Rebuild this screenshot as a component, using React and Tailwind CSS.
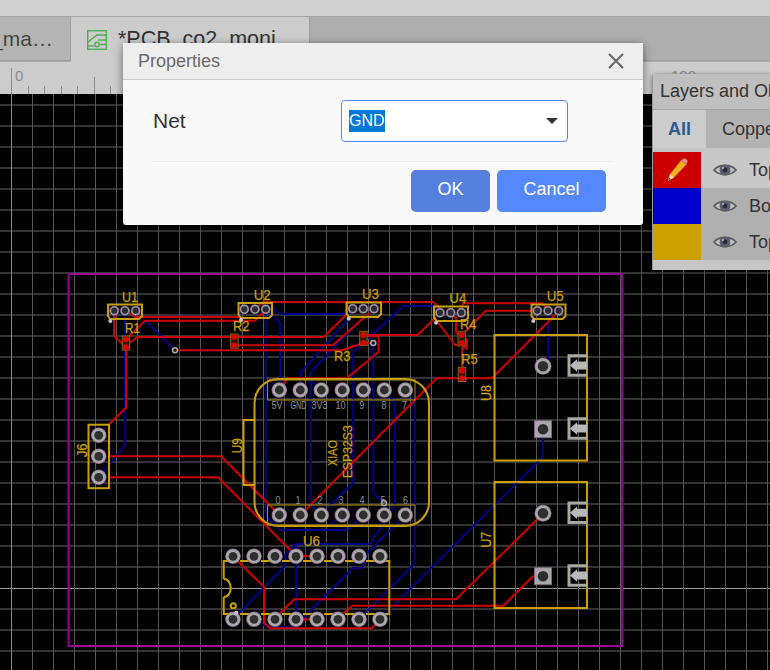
import React from "react";

const RED = "#d00000";
const BLUE = "#000088";
const GOLD = "#cca000";

const redTraces = [
  "M114 314V336L126 347.5V408L109 424",
  "M126 339L131 342L137 337H323.5L347 314",
  "M128 312L135 317H240",
  "M127 338L145 320.7H255L265.7 310",
  "M255 309L263 302H433L441 309",
  "M234 345.3H333L369 313",
  "M175 350.3H342L363 343",
  "M363 335H417.5L436 317",
  "M363 336H378.5V352L346.7 378.3H287L279.3 390",
  "M363 343H373",
  "M450.7 312L456 318V333L461.7 335",
  "M436 320L455 345H461.7L467 349V340L461.7 335",
  "M461.7 335L485.7 310.7H533",
  "M461 312L463 303.3H541.7L548 310",
  "M462 347V371",
  "M462 378.3H491.7L555 315",
  "M462 378.3H436.7L300.3 515",
  "M109 456.3H221L279.3 515",
  "M109 477.3H218L296 556",
  "M296 556H317",
  "M238.3 561.7L264.3 587.3V623L270 628.3H371.7L380 619.3",
  "M280 613.3L294.3 599.3H456L537.3 519.3",
  "M343.3 613.3L352.3 605.7H503.3L533.3 575.7",
  "M296 619.3H317",
];

const blueTraces = [
  "M125 311V445L109 465L98.7 477.3",
  "M145 320L175 350.3",
  "M265.7 310V516L280 530H348L362.3 515",
  "M265.7 309L280 323V390",
  "M273 308L280 314H347",
  "M300.3 390V373L348 320",
  "M321.3 390L310 380V373L345 336L356 325",
  "M310.7 373V505L321.3 515",
  "M342.3 515L330 525",
  "M353.3 483V352L403 306H435",
  "M353.3 483L327 508",
  "M373.3 343V493L384.3 503V515",
  "M384.3 390L395 403V505L370 544H296L285 555V566L233 619.3",
  "M296 544V619.3",
  "M405.3 390L415 400V563L365 613L359 619.3",
  "M405.3 515L368 552L362 568H353L306 615L298 627H268L254 619.3",
  "M543 429.3V457L538 461.7L388 611L380 619.3",
  "M548 310V366",
];

const smallPads = [
  [114.3, 310.7], [125, 310.7], [135.7, 310.7],
  [244.3, 309.3], [255, 309.3], [265.7, 309.3],
  [352.7, 308.7], [363.3, 308.7], [374, 308.7],
  [440, 312.7], [450.7, 312.7], [461.3, 312.7],
  [537.3, 310.7], [548, 310.7], [558.7, 310.7],
];

const cornerDots = [[110.3, 321], [241, 320], [348.7, 318.7], [436, 322.7], [533.3, 321], [236.3, 612.7]];

const largePads = [
  [98.7, 435.3], [98.7, 456.3], [98.7, 477.3],
  ...[279.3, 300.3, 321.3, 342.3, 363.3, 384.3, 405.3].flatMap((x) => [[x, 390], [x, 515]]),
  ...[233, 254, 275, 296, 317, 338, 359, 380].flatMap((x) => [[x, 556.3], [x, 619.3]]),
];

const resistors = [
  [122.3, 336, 126, 339.3, 347.3],
  [230.7, 334, 234, 337, 345.3],
  [359.7, 331.3, 363.3, 335, 343],
  [458, 331.7, 461.7, 335, 343],
  [458.3, 367.3, 462, 370.7, 378.3],
];

const labels = [
  ["U1", 122, 301.7, 16], ["U2", 253.7, 300, 17], ["U3", 362, 299.3, 17], ["U4", 449.3, 303.3, 17],
  ["U5", 546.7, 300.7, 17], ["U6", 303, 546, 17], ["R1", 125, 332.7, 15], ["R2", 233, 330.7, 16.5],
  ["R3", 334, 361.3, 16.5], ["R4", 460, 328.7, 16.5], ["R5", 461.3, 364, 16.5],
];

const rotated = [
  ["U8", 490.7, 401, 16], ["U7", 490.7, 547.7, 16], ["J6", 86.7, 457.3, 14], ["U9", 241.7, 453.3, 15],
  ["XIAO", 337.3, 466, 26], ["ESP32S3", 351.7, 478.3, 53],
];

const topPins = [["5V", 277, 11], ["GND", 298.5, 16], ["3V3", 319.5, 16], ["10", 340.5, 10], ["9", 361.7, 5], ["8", 384, 5], ["7", 404.5, 5]];
const bottomPins = [["0", 278, 5], ["1", 298, 5], ["2", 320, 5], ["3", 341, 5], ["4", 362, 5], ["5", 383, 5], ["6", 405.5, 5]];

function Socket({ y }) {
  return (
    <g>
      <path d={`M587 ${y}H569V${y + 19.5}H587`} fill="none" stroke="#a8a89e" strokeWidth="3" />
      <path d={`M570 ${y + 9.7}L577 ${y + 3.5}V${y + 5.7}H587V${y + 13.7}H577V${y + 16}Z`} fill="#b8b8b8" />
    </g>
  );
}

function Board() {
  const vs = Array.from({ length: 37 }, (_, i) => 11.5 + 21 * i);
  const hs = Array.from({ length: 28 }, (_, i) => 588.5 - 21 * (i - 3));
  return (
    <svg width="770" height="576" viewBox="0 94 770 576" className="block">
      <rect x="0" y="94" width="770" height="576" fill="#000" />
      {hs.map((y) => (
        <line key={y} x1="0" x2="770" y1={y === 588.5 ? y : y - 0.5} y2={y === 588.5 ? y : y - 0.5} stroke={y === 588.5 ? "#9a9a9a" : "#666666"} />
      ))}
      {vs.map((x) => (
        <line key={x} x1={x} x2={x} y1="94" y2="670" stroke={x === 11.5 ? "#8a8a8a" : "#565656"} />
      ))}
      <rect x="68.5" y="274" width="553.5" height="372" fill="none" stroke="#990099" strokeWidth="2" />

      {blueTraces.map((d) => <path key={d} d={d} fill="none" stroke={BLUE} strokeWidth="2" strokeLinejoin="round" />)}
      {redTraces.map((d) => <path key={d} d={d} fill="none" stroke={RED} strokeWidth="2" strokeLinejoin="round" />)}

      {/* footprints */}
      <g fill="none" stroke={GOLD} strokeWidth="2">
        <path d="M108 304.5H142V316L139 319H110L108 316Z" />
        <path d="M238.5 303H272V315L269 318H241L238.5 315Z" />
        <path d="M346.5 302.5H381V314L378 317H349L346.5 314Z" />
        <path d="M434 306.5H468V318L465 321H437L434 318Z" />
        <path d="M531.5 304.5H565.5V316L562.5 319H534L531.5 316Z" />
        <rect x="88.5" y="424.7" width="20.5" height="63.5" />
        <rect x="254.5" y="379" width="174.5" height="147" rx="24" />
        <path d="M254 420H243.5V485H254" />
        <rect x="494.5" y="335" width="92.5" height="125.5" />
        <rect x="494.5" y="482" width="92.5" height="126" />
        <path d="M223.7 579V561H233" />
        <path d="M223.7 579C233 579 233 597 223.7 597" />
        <path d="M223.7 597V614H233" />
        <path d="M380 561H389.3V614H380" />
        <path d="M233 561H380" strokeDasharray="14 7" strokeDashoffset="-7" />
        <path d="M233 614H380" strokeDasharray="14 7" strokeDashoffset="-7" />
        <circle cx="233.3" cy="605.7" r="2.5" />
      </g>
      <g fill="none" stroke="#b09000" strokeWidth="1">
        <rect x="267.5" y="380" width="147.5" height="20" />
        <rect x="267.5" y="505" width="147.5" height="20" />
      </g>
      <Socket y={355.8} />
      <Socket y={418.8} />
      <Socket y={503} />
      <Socket y={565.8} />

      {/* resistors */}
      {resistors.map(([x, y, cx, a, b]) => (
        <g key={x + "-" + y}>
          <rect x={x} y={y} width="7.4" height="14.2" fill="#241a00" stroke="#8a6c00" strokeWidth="1" />
          <circle cx={cx} cy={a} r="3" fill="#dd0000" />
          <circle cx={cx} cy={b} r="3" fill="#dd0000" />
        </g>
      ))}

      {/* pads */}
      {smallPads.map(([x, y]) => (
        <g key={x + "-" + y}>
          <circle cx={x} cy={y} r="5" fill="#7f5f92" />
          <circle cx={x} cy={y} r="4.2" fill="#a5a5a5" />
          <circle cx={x} cy={y} r="3.1" fill="#2b2b33" />
        </g>
      ))}
      {largePads.map(([x, y]) => (
        <g key={x + "-" + y}>
          <circle cx={x} cy={y} r="7.8" fill="#8a5f8a" />
          <circle cx={x} cy={y} r="7" fill="#a9a9a9" />
          <circle cx={x} cy={y} r="4.4" fill="#2e2e2e" />
        </g>
      ))}
      {[[543, 366.3], [543, 513.3]].map(([x, y]) => (
        <g key={y}>
          <circle cx={x} cy={y} r="8.5" fill="#8a5f8a" />
          <circle cx={x} cy={y} r="7.8" fill="#a9a9a9" />
          <circle cx={x} cy={y} r="5.3" fill="#2e2e2e" />
        </g>
      ))}
      {[420.7, 567.7].map((y) => (
        <g key={y}>
          <rect x="534.5" y={y} width="17" height="17" fill="#a9a9a9" stroke="#8a5f8a" />
          <circle cx="543" cy={y + 8.6} r="5.3" fill="#2e2e2e" />
        </g>
      ))}
      {cornerDots.map(([x, y]) => <circle key={x} cx={x} cy={y} r="2" fill="#c8c8c8" />)}
      {[[175, 350.3], [373.3, 343], [384, 503]].map(([x, y]) => (
        <g key={x}>
          <circle cx={x} cy={y} r="2.5" fill="#1c1c1c" stroke="#a9a9a9" strokeWidth="1.5" />
        </g>
      ))}

      {/* text */}
      {labels.map(([t, x, y, len]) => (
        <text key={t} x={x} y={y} fontSize="14.5" fill={GOLD} stroke={GOLD} strokeWidth="0.25" textLength={len} lengthAdjust="spacingAndGlyphs">{t}</text>
      ))}
      {rotated.map(([t, x, y, len]) => (
        <text key={t} x={x} y={y} fontSize={t === "XIAO" || t === "ESP32S3" ? "13" : "14.5"} fill={GOLD} stroke={GOLD} strokeWidth="0.25" textLength={len} lengthAdjust="spacingAndGlyphs" transform={`rotate(-90 ${x} ${y})`}>{t}</text>
      ))}
      {topPins.map(([t, x, len]) => (
        <text key={t} x={x} y="408.5" fontSize="10.5" fill="#959595" textAnchor="middle" textLength={len} lengthAdjust="spacingAndGlyphs">{t}</text>
      ))}
      {bottomPins.map(([t, x, len]) => (
        <text key={t} x={x} y="503.5" fontSize="10.5" fill="#959595" textAnchor="middle" textLength={len} lengthAdjust="spacingAndGlyphs">{t}</text>
      ))}
    </svg>
  );
}

function Ruler() {
  const ticks = Array.from({ length: 46 }, (_, i) => i);
  return (
    <svg width="770" height="32" viewBox="0 62 770 32" className="block">
      {ticks.map((i) => {
        const x = Math.round(11 + 16.53 * i) + 0.5;
        const top = i === 0 ? 68 : i % 5 === 0 ? 77 : 86;
        return <line key={i} x1={x} x2={x} y1={top} y2="94" stroke="#8c8c8c" />;
      })}
      <text x="15" y="81" fontSize="15" fill="#8a8a8a">0</text>
      <text x="671" y="81" fontSize="15" fill="#8a8a8a">100</text>
    </svg>
  );
}

function PcbIcon() {
  return (
    <svg width="22" height="22" viewBox="0 0 22 22" fill="none" stroke="#4caf50" strokeWidth="1.4" className="shrink-0">
      <rect x="1.7" y="1.7" width="18.6" height="18.6" />
      <path d="M20 6H11L2 13" />
      <path d="M20 11H12" />
      <path d="M20 15.5H14" />
      <circle cx="11" cy="15.5" r="2.2" />
      <path d="M2 17H8" />
    </svg>
  );
}

function Eye() {
  return (
    <svg width="24" height="18" viewBox="0 0 24 18" className="shrink-0">
      <path d="M1 9C6 3 18 3 23 9C18 15 6 15 1 9Z" fill="#c4c4c4" stroke="#5e5e5e" strokeWidth="1.8" />
      <circle cx="12" cy="9" r="5.5" fill="#5c5c72" />
      <circle cx="12" cy="9" r="2.4" fill="#2c2c36" />
      <circle cx="10" cy="7" r="0.9" fill="#c8c8d8" />
    </svg>
  );
}

function Pencil() {
  return (
    <svg width="23" height="24" viewBox="0 0 26 30">
      <path d="M17.5 3L24 8L8.5 24.5L1 28L4 20Z" fill="#f0b020" stroke="#b97f10" strokeWidth="0.8" />
      <path d="M17.5 3L20 0.8C21 0.2 22.5 0.5 23.5 1.3L25 2.8C25.6 3.8 25.6 5 25 6L24 8Z" fill="#e88c8c" stroke="#b06060" strokeWidth="0.6" />
      <path d="M4 20L8.5 24.5L1 28Z" fill="#f3dcb0" />
      <path d="M1 28L2.7 24.6L4.5 26.2Z" fill="#333" />
    </svg>
  );
}

function LayerRow({ color, text, active, children }) {
  return (
    <div className={active ? "flex h-9 items-center bg-[#c8c8c8]" : "flex h-9 items-center bg-[#b0b0b0]"}>
      <div className={`flex h-9 w-12 items-center justify-center ${color}`}>{children}</div>
      <div className="mx-3"><Eye /></div>
      <span className="whitespace-nowrap text-[18px] text-[#333]">{text}</span>
    </div>
  );
}

export default function App() {
  return (
    <div className="relative flex h-[670px] w-[770px] flex-col overflow-hidden bg-black font-['Liberation_Sans',Arial,sans-serif]">
      <div className="h-[17px] shrink-0 border-b border-[#a6a6a6] bg-[#cfcfcf]" />
      <div className="flex h-[45px] shrink-0 bg-[#aeaeae]">
        <div className="flex h-[44px] w-[71px] items-center justify-end overflow-hidden whitespace-nowrap border-r border-b border-[#9c9c9c] bg-[#b4b4b4] pr-[17px] text-[21px] text-[#444]">_ma…</div>
        <div className="flex h-[45px] w-[239px] items-center gap-[10px] overflow-hidden whitespace-nowrap border-r border-[#9c9c9c] bg-[#cccccc] pl-[15px] text-[21.5px] text-[#333]">
          <PcbIcon />
          <span>*PCB_co2_moni</span>
        </div>
        <div className="h-[44px] flex-1 border-b border-[#a0a0a0]" />
      </div>
      <div className="h-[32px] shrink-0 bg-[#cccccc]"><Ruler /></div>
      <div className="flex-1"><Board /></div>

      {/* Properties dialog */}
      <div className="absolute left-[123px] top-[43px] flex w-[520px] flex-col rounded-[3px] bg-[#f9f9f9] shadow-[0_2px_8px_rgba(0,0,0,0.5)]">
        <div className="flex h-[37px] items-center justify-between border-b border-[#cccccc] bg-[#eeeeee] pl-[15px] pr-[19px] text-[18px] text-[#6a6a6a]">
          <span>Properties</span>
          <svg width="16" height="16" viewBox="0 0 16 16" stroke="#666" strokeWidth="2" fill="none">
            <path d="M1 1L15 15M15 1L1 15" />
          </svg>
        </div>
        <div className="flex flex-col px-[30px]">
          <div className="flex h-[82px] items-center border-b border-[#eeeeee] pt-[1px]">
            <span className="w-[188px] text-[21px] text-[#333]">Net</span>
            <div className="flex h-[42px] w-[227px] items-center justify-between rounded-[4px] border border-[#5588ff] bg-white pl-[7px] pr-[9px]">
              <span className="flex h-[22px] items-center bg-[#0078d7] text-[16px] text-white">GND</span>
              <span className="h-0 w-0 border-x-[6px] border-t-[6px] border-x-transparent border-t-[#333]" />
            </div>
          </div>
          <div className="flex h-[63px] items-start justify-end gap-[7px] pt-[8px] pr-[7px]">
            <button className="h-[42px] w-[79px] rounded-[5px] bg-[#5580dd] pb-[4px] text-[18px] text-white">OK</button>
            <button className="h-[42px] w-[109px] rounded-[5px] bg-[#5588ff] pb-[4px] text-[18px] text-white">Cancel</button>
          </div>
        </div>
      </div>

      {/* Layers panel */}
      <div className="absolute left-[652px] top-[74px] h-[196px] w-[200px] rounded-tl-[4px] border-l border-[#999] bg-[#c6c6c6] shadow-[0_1px_4px_rgba(0,0,0,0.5)]">
        <div className="flex h-[35px] items-center whitespace-nowrap bg-[#bfbfbf] pl-[7px] text-[18px] text-[#333]">Layers and Objects</div>
        <div className="flex h-[39px] items-center border-t border-[#a8a8a8] text-[18px]">
          <div className="flex h-[38px] w-[53px] items-center justify-center bg-[#cccccc] font-bold text-[#2f5a90]">All</div>
          <div className="flex h-[38px] flex-1 items-center bg-[#b2b2b2] pl-[16px] text-[#333]">Copper</div>
        </div>
        <div className="mt-[4px] flex flex-col">
          <LayerRow color="bg-[#cc0000]" text="TopLayer" active>
            <Pencil />
          </LayerRow>
          <LayerRow color="bg-[#0000cc]" text="BottomLayer" />
          <LayerRow color="bg-[#cca000]" text="TopSilk" />
        </div>
      </div>
    </div>
  );
}
